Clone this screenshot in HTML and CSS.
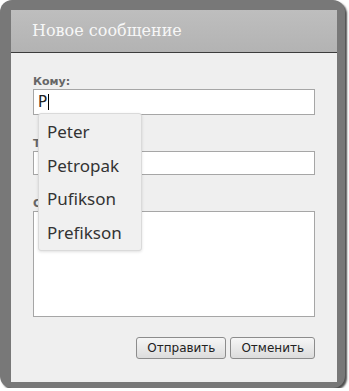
FILE: index.html
```html
<!DOCTYPE html>
<html lang="ru">
<head>
    <meta charset="UTF-8">
    <title>Новое сообщение</title>
    <link rel="stylesheet" href="styles.css">
</head>
<body>
    <div class="frame">
        <div class="window">
            <header class="window-head">
                <h1>Новое сообщение</h1>
            </header>
            <form class="message-form">
                <div class="field">
                    <label>Кому:</label>
                    <div class="text-box">P<span class="caret"></span></div>
                    <ul class="suggest">
                        <li>Peter</li>
                        <li>Petropak</li>
                        <li>Pufikson</li>
                        <li>Prefikson</li>
                    </ul>
                </div>
                <div class="field">
                    <label for="subject">Тема:</label>
                    <input type="text" id="subject" class="text-box small">
                </div>
                <div class="field">
                    <label for="body">Сообщение:</label>
                    <textarea id="body" class="text-area"></textarea>
                </div>
                <div class="actions">
                    <button type="button">Отправить</button>
                    <button type="button">Отменить</button>
                </div>
            </form>
        </div>
    </div>
</body>
</html>
```

FILE: styles.css
```css
/* Общие */
body {
    margin: 0;
    padding: 0;
    background: #ffffff;
    font-family: 'DejaVu Sans', Verdana, sans-serif;
}

/* Серая рамка окна */
.frame {
    width: 345px;
    height: 388px;
    box-sizing: border-box;
    padding: 10px 8px 6px 11px;
    background: #787878;
    border-radius: 12px;
    box-shadow: 2px 2px 2px #4e4e4e;
}

.window {
    height: 100%;
    background: #efefef;
}

/* Заголовок */
.window-head {
    height: 42px;
    background: linear-gradient(to bottom, #bebebe, #b3b3b3);
    border-bottom: 1px solid #3c3c3c;
    padding-left: 21px;
}

.window-head h1 {
    margin: 0;
    font-family: 'DejaVu Serif', Georgia, serif;
    font-weight: normal;
    font-size: 16px;
    line-height: 42px;
    color: #f7f7f7;
}

/* Форма */
.message-form {
    padding: 22px 22px 0 22px;
}

.field {
    position: relative;
    margin-bottom: 22px;
}

.field label {
    display: block;
    font-size: 11px;
    font-weight: bold;
    line-height: 14px;
    color: #666;
}

.text-box {
    display: block;
    width: 100%;
    height: 26px;
    box-sizing: border-box;
    margin: 0;
    padding: 0 4px;
    border: 1px solid #a6a6a6;
    background: #fff;
    font-family: 'DejaVu Sans', Verdana, sans-serif;
    font-size: 15px;
    line-height: 24px;
    color: #222;
}

.text-box.small {
    height: 24px;
}

.caret {
    display: inline-block;
    width: 1px;
    height: 16px;
    margin-left: 1px;
    background: #000;
    vertical-align: -3px;
}

.text-area {
    display: block;
    width: 100%;
    height: 106px;
    box-sizing: border-box;
    margin: 0;
    border: 1px solid #a6a6a6;
    background: #fff;
    resize: none;
}

/* Подсказки */
.suggest {
    position: absolute;
    z-index: 5;
    top: 38px;
    left: 5px;
    width: 104px;
    height: 138px;
    box-sizing: border-box;
    margin: 0;
    padding: 1px 0 0 8px;
    list-style: none;
    background: #f0f0f0;
    border: 1px solid #dadada;
    border-radius: 3px;
    box-shadow: 0 1px 3px rgba(0, 0, 0, 0.12);
    font-family: 'Noto Sans', sans-serif;
    font-size: 17px;
    line-height: 33.5px;
    color: #333;
}

/* Кнопки */
.actions {
    display: flex;
    justify-content: flex-end;
    gap: 4px;
    margin-top: -2px;
}

.actions button {
    height: 22px;
    padding: 0 10px;
    border: 1px solid #8c8c8c;
    border-radius: 3px;
    background: linear-gradient(to bottom, #f6f6f6, #dcdcdc);
    font-family: 'DejaVu Sans', Verdana, sans-serif;
    font-size: 12px;
    color: #222;
}
```
